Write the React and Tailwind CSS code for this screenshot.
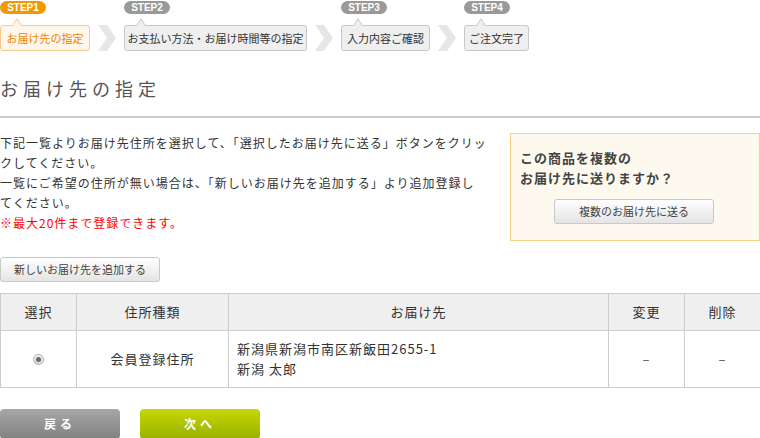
function Step({ label, text, active, w }) {
  const bg = active ? "#fff7ec" : "#efefef";
  const bd = active ? "#f9c98c" : "#c8c8c8";
  return (
    <div className="flex flex-col">
      <div
        className={`mt-[1px] w-[46px] h-[13px] rounded-full flex items-center justify-center text-[10px] font-bold text-white leading-none font-['Liberation_Sans',sans-serif] ${
          active ? "bg-[#f39800]" : "bg-[#999999]"
        }`}
      >
        {label}
      </div>
      <div
        className={`relative mt-[11px] h-[26px] ${w} rounded-[3px] border flex items-center justify-center text-[11px] whitespace-nowrap ${
          active
            ? "bg-[#fff7ec] border-[#f9c98c] text-[#f08300]"
            : "bg-[#efefef] border-[#c8c8c8] text-[#333333]"
        }`}
      >
        <svg className="absolute left-[11px] top-[-8px]" width="10" height="8" viewBox="0 0 10 8">
          <path d="M0,8 L5,0.5 L10,8 Z" fill={bg} />
          <path d="M0.5,8 L5,0.8 L9.5,8" fill="none" stroke={bd} strokeWidth="1" />
        </svg>
        {text}
      </div>
    </div>
  );
}

function Chevron() {
  return (
    <svg className="mx-[8px] shrink-0" width="18" height="26" viewBox="0 0 18 26">
      <polygon points="0,0 9,0 18,13 9,26 0,26 9,13" fill="#e6e6e6" />
    </svg>
  );
}

export default function App() {
  return (
    <div className="w-[760px] h-[438px] overflow-hidden bg-white font-['Noto_Sans_CJK_JP',sans-serif] text-[#333333]">
      {/* steps */}
      <div className="flex items-end h-[51px]">
        <Step label="STEP1" text="お届け先の指定" active w="w-[90px]" />
        <Chevron />
        <Step label="STEP2" text="お支払い方法・お届け時間等の指定" w="w-[183px]" />
        <Chevron />
        <Step label="STEP3" text="入力内容ご確認" w="w-[89px]" />
        <Chevron />
        <Step label="STEP4" text="ご注文完了" w="w-[65px]" />
      </div>

      {/* heading */}
      <div className="mt-[25px] pb-[16px] border-b-2 border-[#cccccc]">
        <h1 className="text-[18px] leading-[24px] tracking-[5px] text-[#555555] font-normal">
          お届け先の指定
        </h1>
      </div>

      {/* content */}
      <div className="mt-[15px] flex justify-between">
        <div className="text-[12px] leading-[20px] tracking-[1px] whitespace-nowrap">
          <div>下記一覧よりお届け先住所を選択して、「選択したお届け先に送る」ボタンをクリッ</div>
          <div>クしてください。</div>
          <div>一覧にご希望の住所が無い場合は、「新しいお届け先を追加する」より追加登録し</div>
          <div>てください。</div>
          <div className="text-[#ff0000]">※最大20件まで登録できます。</div>
        </div>
        <div className="w-[250px] h-[108px] border border-[#f6d282] bg-[#fdf9ee] px-[9px] pt-[14px]">
          <div className="text-[13px] leading-[20px] font-bold tracking-[1px] text-[#444444]">
            この商品を複数の
            <br />
            お届け先に送りますか？
          </div>
          <div className="mt-[11px] flex justify-center pr-[2px]">
            <button className="w-[160px] h-[25px] rounded-[3px] border border-[#c8c8c8] bg-gradient-to-b from-[#ffffff] to-[#e4e4e4] text-[11px] text-[#444444] flex items-center justify-center">
              複数のお届け先に送る
            </button>
          </div>
        </div>
      </div>

      {/* add button */}
      <div className="mt-[16px]">
        <button className="w-[160px] h-[25px] rounded-[3px] border border-[#c8c8c8] bg-gradient-to-b from-[#ffffff] to-[#e4e4e4] text-[11px] text-[#444444] flex items-center justify-center">
          新しいお届け先を追加する
        </button>
      </div>

      {/* table */}
      <table className="mt-[11px] w-[760px] table-fixed border-collapse text-[13px] tracking-[1px]">
        <colgroup>
          <col className="w-[76px]" />
          <col className="w-[152px]" />
          <col className="w-[380px]" />
          <col className="w-[76px]" />
          <col className="w-[76px]" />
        </colgroup>
        <thead>
          <tr className="h-[37px] bg-[#efefef]">
            <th className="border border-[#cccccc] font-normal text-center">選択</th>
            <th className="border border-[#cccccc] font-normal text-center">住所種類</th>
            <th className="border border-[#cccccc] font-normal text-center">お届け先</th>
            <th className="border border-[#cccccc] font-normal text-center">変更</th>
            <th className="border border-[#cccccc] font-normal text-center">削除</th>
          </tr>
        </thead>
        <tbody>
          <tr className="h-[57px]">
            <td className="border border-[#cccccc] text-center">
              <div className="mx-auto w-[11px] h-[11px] rounded-full border border-[#b0b0b0] bg-gradient-to-b from-[#f4f4f4] to-[#d8d8d8] flex items-center justify-center">
                <div className="w-[5px] h-[5px] rounded-full bg-[#6a6a6a]" />
              </div>
            </td>
            <td className="border border-[#cccccc] text-center">会員登録住所</td>
            <td className="border border-[#cccccc] pl-[8px] leading-[20px] align-top pt-[8px]">
              新潟県新潟市南区新飯田2655-1
              <br />
              新潟 太郎
            </td>
            <td className="border border-[#cccccc] text-center text-[#555555]">–</td>
            <td className="border border-[#cccccc] text-center text-[#555555]">–</td>
          </tr>
        </tbody>
      </table>

      {/* bottom buttons */}
      <div className="mt-[21px] flex gap-[20px]">
        <button className="w-[120px] h-[30px] rounded-[4px] bg-gradient-to-b from-[#a8a8a8] to-[#808080] text-white text-[12px] font-bold tracking-[4px] flex items-center justify-center">
          戻る
        </button>
        <button className="w-[120px] h-[30px] rounded-[4px] bg-gradient-to-b from-[#c6d800] to-[#99b000] text-white text-[12px] font-bold tracking-[4px] flex items-center justify-center">
          次へ
        </button>
      </div>
    </div>
  );
}
